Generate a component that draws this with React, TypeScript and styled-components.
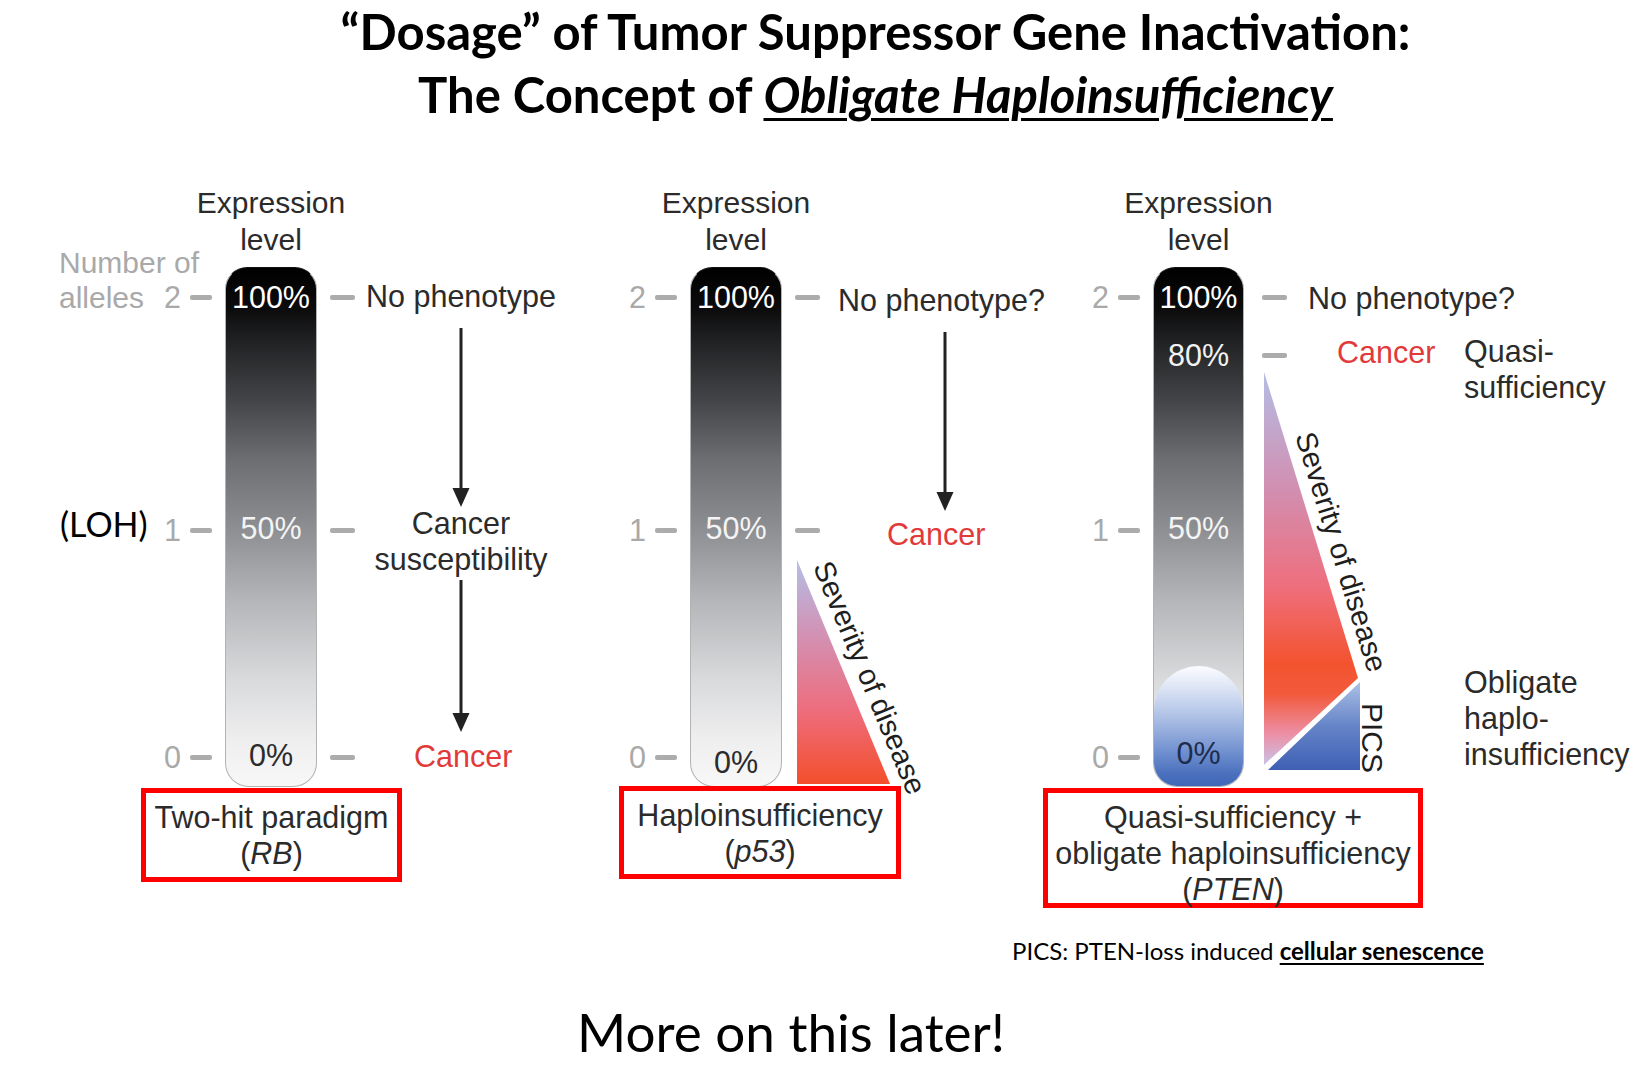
import React from "react";
import styled, { createGlobalStyle } from "styled-components";

const Global = createGlobalStyle`
  html, body { margin: 0; padding: 0; background: #ffffff; }
  body { width: 1651px; height: 1079px; overflow: hidden; }
`;

const Slide = styled.div`
  width: 1651px;
  height: 1079px;
  display: flex;
  flex-direction: column;
  background: #ffffff;
`;

const Title = styled.h1`
  margin: 0;
  padding-left: 100px;
  text-align: center;
  font-family: Lato, "Open Sans", sans-serif;
  font-weight: 700;
  font-size: 49px;
  line-height: 63px;
  color: #000;
  white-space: nowrap;
`;

const TitleEm = styled.em`
  font-style: italic;
  text-decoration: underline;
  text-decoration-thickness: 3px;
  text-underline-offset: 5px;
`;

const Figure = styled.div`
  display: flex;
  margin-top: 58px;
  padding-left: 57px;
`;

const Panel = styled.div<{ $cols: string; $rows: string; $ml: number }>`
  display: grid;
  grid-template-columns: ${(p) => p.$cols};
  grid-template-rows: ${(p) => p.$rows};
  margin-left: ${(p) => p.$ml}px;
  font-family: "Liberation Sans", Arial, sans-serif;
  font-size: 30.5px;
  color: #2b2b2b;
`;

const Header = styled.div`
  grid-column: bar;
  grid-row: head;
  display: flex;
  flex-direction: column;
  align-items: center;
  font-size: 30px;
  line-height: 37px;
  white-space: nowrap;
`;

const AxisNote = styled.div`
  grid-column: axis;
  grid-row: pre / g1;
  align-self: end;
  margin-bottom: 12px;
  padding-left: 2px;
  font-size: 30px;
  line-height: 35px;
  color: #a9a9a9;
  white-space: nowrap;
`;

const Loh = styled.div`
  grid-column: axis;
  grid-row: l1;
  align-self: center;
  margin-bottom: 14px;
  padding-left: 3px;
  font-family: Lato, "Open Sans", sans-serif;
  font-size: 34px;
  color: #000;
  white-space: nowrap;
`;

const LeftTick = styled.div<{ $row: string }>`
  grid-column: num;
  grid-row: ${(p) => p.$row};
  align-self: center;
  justify-self: end;
  display: flex;
  align-items: center;
  gap: 9px;
  padding-right: 13px;
  color: #a9a9a9;
  line-height: 34px;
`;

const Dash = styled.span<{ $w: number }>`
  display: block;
  width: ${(p) => p.$w}px;
  height: 5px;
  border-radius: 2px;
  background: #acacac;
`;

const RightTick = styled.div<{ $row: string; $pl: number }>`
  grid-column: rdash;
  grid-row: ${(p) => p.$row};
  align-self: center;
  justify-self: start;
  padding-left: ${(p) => p.$pl}px;
`;

const Bar = styled.div`
  grid-column: bar;
  grid-row: l2 / post;
  box-sizing: border-box;
  border: 1.5px solid #b3b3b3;
  border-top-color: #111;
  border-radius: 22px 22px 24px 24px;
  background: linear-gradient(
    to bottom,
    #000000 0%,
    #0c0c0d 8%,
    #1d1e20 13%,
    #444649 26%,
    #6c6e72 37%,
    #8e9094 51%,
    #b3b5b8 64%,
    #d8d9db 79%,
    #eeeeef 91%,
    #f8f8f8 100%
  );
  overflow: hidden;
  display: flex;
  flex-direction: column;
  justify-content: flex-end;
`;

const Pill = styled.div`
  height: 120px;
  border-radius: 46px 46px 0 0;
  background: linear-gradient(
    to bottom,
    #fbfcff 0%,
    #dde5f5 18%,
    #a9bde4 45%,
    #6f8fcf 72%,
    #4a70bd 90%,
    #3f67b7 100%
  );
`;

const Pct = styled.div<{ $row: string; $color: string; $shift: number }>`
  grid-column: bar;
  grid-row: ${(p) => p.$row};
  justify-self: center;
  align-self: center;
  z-index: 1;
  color: ${(p) => p.$color};
  line-height: 34px;
  transform: translateY(${(p) => p.$shift}px);
`;

const Annot = styled.div<{ $row: string; $ml: number; $shift: number; $span?: string }>`
  grid-column: ${(p) => p.$span || "annot"};
  grid-row: ${(p) => p.$row};
  align-self: center;
  justify-self: start;
  margin-left: ${(p) => p.$ml}px;
  line-height: 34px;
  white-space: nowrap;
  transform: translateY(${(p) => p.$shift}px);
`;

const CancerText = styled(Annot)`
  color: #e23a3a;
`;

const CenterBlock = styled.div<{ $row: string; $mt: number }>`
  grid-column: annot;
  grid-row: ${(p) => p.$row};
  align-self: start;
  justify-self: center;
  margin-top: ${(p) => p.$mt}px;
  text-align: center;
  line-height: 36px;
  white-space: nowrap;
`;

const SideNote = styled.div<{ $row: string; $align: string; $m: string }>`
  grid-column: note;
  grid-row: ${(p) => p.$row};
  align-self: ${(p) => p.$align};
  justify-self: start;
  margin: ${(p) => p.$m};
  line-height: 36px;
  white-space: nowrap;
`;

const ArrowBox = styled.div<{ $row: string; $mt: number; $ml?: number }>`
  grid-column: annot;
  grid-row: ${(p) => p.$row};
  align-self: start;
  justify-self: ${(p) => (p.$ml === undefined ? "center" : "start")};
  margin-top: ${(p) => p.$mt}px;
  margin-left: ${(p) => (p.$ml === undefined ? 0 : p.$ml)}px;
  display: flex;
`;

const Drawing = styled.div<{ $col: string; $row: string; $ml: number; $mt: number }>`
  grid-column: ${(p) => p.$col};
  grid-row: ${(p) => p.$row};
  align-self: start;
  justify-self: start;
  margin-left: ${(p) => p.$ml}px;
  margin-top: ${(p) => p.$mt}px;
  display: flex;
  svg {
    overflow: visible;
  }
`;

const Caption = styled.div<{ $ml: number; $mt: number; $w: number; $h: number }>`
  grid-column: 1 / -1;
  grid-row: cap;
  justify-self: start;
  margin-left: ${(p) => p.$ml}px;
  margin-top: ${(p) => p.$mt}px;
  width: ${(p) => p.$w}px;
  height: ${(p) => p.$h}px;
  box-sizing: border-box;
  border: 5px solid #ff0000;
  padding-top: 6px;
  text-align: center;
  line-height: 36px;
  white-space: nowrap;
`;

const Footnote = styled.p`
  margin: 28px 0 0 1012px;
  font-family: Lato, "Open Sans", sans-serif;
  font-size: 24px;
  line-height: 30px;
  color: #000;
  white-space: nowrap;
`;

const Strong = styled.b`
  font-weight: 700;
  text-decoration: underline;
  text-decoration-thickness: 2px;
  text-underline-offset: 3px;
`;

const Later = styled.p`
  margin: 34px 0 0 577px;
  font-family: Lato, "Open Sans", sans-serif;
  font-size: 53px;
  line-height: 64px;
  color: #000;
  white-space: nowrap;
`;

const Arrow: React.FC<{ h: number }> = ({ h }) => (
  <svg width="20" height={h} viewBox={`0 0 20 ${h}`}>
    <line x1="10" y1="0" x2="10" y2={h - 14} stroke="#222" strokeWidth="3" />
    <polygon points={`1.5,${h - 19} 18.5,${h - 19} 10,${h}`} fill="#222" />
  </svg>
);

const SEV_FONT = {
  fontFamily: '"Liberation Sans", Arial, sans-serif',
  fontSize: 29.5,
  fill: "#1e1e1e",
};

const TriangleP53: React.FC = () => (
  <svg width="93" height="224" viewBox="0 0 93 224">
    <defs>
      <linearGradient id="g53" x1="0" y1="0" x2="0" y2="1">
        <stop offset="0" stopColor="#b5bee6" />
        <stop offset="0.35" stopColor="#d48fb1" />
        <stop offset="0.68" stopColor="#ee6c7b" />
        <stop offset="1" stopColor="#f34f2b" />
      </linearGradient>
    </defs>
    <polygon points="0,0 93,224 0,224" fill="url(#g53)" />
    <text x="0" y="0" transform="translate(15.7 6.5) rotate(67.45)" style={SEV_FONT}>
      Severity of disease
    </text>
  </svg>
);

const TrianglePten: React.FC = () => (
  <svg width="96" height="398" viewBox="0 0 96 398">
    <defs>
      <linearGradient id="gpr" x1="0" y1="0" x2="0" y2="1">
        <stop offset="0" stopColor="#b4bde6" />
        <stop offset="0.3" stopColor="#d28eb0" />
        <stop offset="0.55" stopColor="#ef6e7c" />
        <stop offset="0.74" stopColor="#f3532f" />
        <stop offset="0.82" stopColor="#f25a3c" />
        <stop offset="0.92" stopColor="#ec8fa5" />
        <stop offset="1" stopColor="#c9c3e6" />
      </linearGradient>
      <linearGradient id="gpb" x1="0" y1="0" x2="0" y2="1">
        <stop offset="0" stopColor="#acc1e7" />
        <stop offset="0.5" stopColor="#6584c8" />
        <stop offset="1" stopColor="#3f5fb4" />
      </linearGradient>
    </defs>
    <polygon points="0,0 94,306 0,393" fill="url(#gpr)" />
    <polygon points="4,398 96,310 96,398" fill="url(#gpb)" />
    <text x="0" y="0" transform="translate(31.1 63.7) rotate(72.9)" style={SEV_FONT}>
      Severity of disease
    </text>
    <text
      x="0"
      y="0"
      textAnchor="middle"
      transform="translate(98 366) rotate(90)"
      style={{ ...SEV_FONT, fontSize: 30 }}
    >
      PICS
    </text>
  </svg>
);

const ROWS_STD =
  "[head] 75px [pre] 8px [l2] 60px [g1] 173px [l1] 60px [g2] 167px [l0] 60px [post] 3px [cap] auto [end]";
const ROWS_PTEN =
  "[head] 75px [pre] 8px [l2] 60px [l80] 56px [g1] 117px [l1] 60px [g2] 167px [l0] 60px [post] 3px [cap] auto [end]";

const Tick: React.FC<{ row: string; n: string }> = ({ row, n }) => (
  <LeftTick $row={row}>
    <span>{n}</span>
    <Dash $w={22} />
  </LeftTick>
);

const RDash: React.FC<{ row: string; pl: number }> = ({ row, pl }) => (
  <RightTick $row={row} $pl={pl}>
    <Dash $w={25} />
  </RightTick>
);

const ExprHeader: React.FC = () => (
  <Header>
    <span>Expression</span>
    <span>level</span>
  </Header>
);

export default function App() {
  return (
    <Slide>
      <Global />
      <Title>
        “Dosage” of Tumor Suppressor Gene Inactivation:
        <br />
        The Concept of <TitleEm>Obligate Haploinsufficiency</TitleEm>
      </Title>

      <Figure>
        {/* Two-hit paradigm */}
        <Panel
          $ml={0}
          $cols="[axis] 103px [num] 65px [bar] 92px [rdash] 49px [annot] 190px [note] 0px [end]"
          $rows={ROWS_STD}
        >
          <ExprHeader />
          <AxisNote>
            Number of
            <br />
            alleles
          </AxisNote>
          <Loh>(LOH)</Loh>
          <Tick row="l2" n="2" />
          <Tick row="l1" n="1" />
          <Tick row="l0" n="0" />
          <Bar />
          <Pct $row="l2" $color="#ffffff" $shift={0}>100%</Pct>
          <Pct $row="l1" $color="#f4f4f4" $shift={-2}>50%</Pct>
          <Pct $row="l0" $color="#2b2b2b" $shift={-2}>0%</Pct>
          <RDash row="l2" pl={13} />
          <RDash row="l1" pl={13} />
          <RDash row="l0" pl={13} />
          <Annot $row="l2" $ml={0} $shift={-1}>No phenotype</Annot>
          <ArrowBox $row="g1" $mt={1}>
            <Arrow h={179} />
          </ArrowBox>
          <CenterBlock $row="l1" $mt={5}>
            Cancer
            <br />
            susceptibility
          </CenterBlock>
          <ArrowBox $row="g2" $mt={20}>
            <Arrow h={152} />
          </ArrowBox>
          <CancerText $row="l0" $ml={48} $shift={-1}>Cancer</CancerText>
          <Caption $ml={84} $mt={-2} $w={261} $h={94}>
            Two-hit paradigm
            <br />(<i>RB</i>)
          </Caption>
        </Panel>

        {/* Haploinsufficiency */}
        <Panel
          $ml={65}
          $cols="[axis] 0px [num] 69px [bar] 92px [rdash] 59px [annot] 209px [note] 0px [end]"
          $rows={ROWS_STD}
        >
          <ExprHeader />
          <Tick row="l2" n="2" />
          <Tick row="l1" n="1" />
          <Tick row="l0" n="0" />
          <Bar />
          <Pct $row="l2" $color="#ffffff" $shift={0}>100%</Pct>
          <Pct $row="l1" $color="#f4f4f4" $shift={-2}>50%</Pct>
          <Pct $row="l0" $color="#2b2b2b" $shift={5}>0%</Pct>
          <RDash row="l2" pl={13} />
          <RDash row="l1" pl={13} />
          <Annot $row="l2" $ml={-3} $shift={3}>No phenotype?</Annot>
          <ArrowBox $row="g1" $mt={5} $ml={94}>
            <Arrow h={179} />
          </ArrowBox>
          <CancerText $row="l1" $ml={46} $shift={4}>Cancer</CancerText>
          <Drawing $col="rdash / end" $row="g2 / post" $ml={15} $mt={0}>
            <TriangleP53 />
          </Drawing>
          <Caption $ml={-2} $mt={-4} $w={282} $h={93}>
            Haploinsufficiency
            <br />(<i>p53</i>)
          </Caption>
        </Panel>

        {/* PTEN */}
        <Panel
          $ml={0}
          $cols="[axis] 0px [num] 103px [bar] 91px [rdash] 70px [annot] 150px [note] 187px [end]"
          $rows={ROWS_PTEN}
        >
          <ExprHeader />
          <Tick row="l2" n="2" />
          <Tick row="l1" n="1" />
          <Tick row="l0" n="0" />
          <Bar>
            <Pill />
          </Bar>
          <Pct $row="l2" $color="#ffffff" $shift={0}>100%</Pct>
          <Pct $row="l80" $color="#f2f2f2" $shift={0}>80%</Pct>
          <Pct $row="l1" $color="#f4f4f4" $shift={-2}>50%</Pct>
          <Pct $row="l0" $color="#1f2d4d" $shift={-4}>0%</Pct>
          <RDash row="l2" pl={18} />
          <RDash row="l80" pl={18} />
          <Annot $row="l2" $ml={-6} $shift={1} $span="annot / end">No phenotype?</Annot>
          <CancerText $row="l80" $ml={23} $shift={-3}>Cancer</CancerText>
          <SideNote $row="l80" $align="start" $m="6px 0 0 0">
            Quasi-
            <br />
            sufficiency
          </SideNote>
          <Drawing $col="rdash / end" $row="l80 / post" $ml={20} $mt={45}>
            <TrianglePten />
          </Drawing>
          <SideNote $row="g2 / post" $align="end" $m="0 0 15px 0">
            Obligate
            <br />
            haplo-
            <br />
            insufficiency
          </SideNote>
          <Caption $ml={-7} $mt={-2} $w={380} $h={120}>
            Quasi-sufficiency +
            <br />
            obligate haploinsufficiency
            <br />(<i>PTEN</i>)
          </Caption>
        </Panel>
      </Figure>

      <Footnote>
        PICS: PTEN-loss induced <Strong>cellular senescence</Strong>
      </Footnote>
      <Later>More on this later!</Later>
    </Slide>
  );
}
